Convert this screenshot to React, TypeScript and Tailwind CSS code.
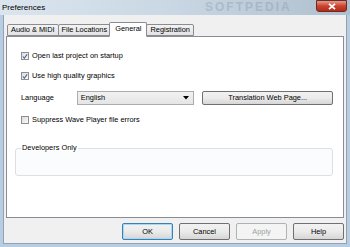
import React, { useState } from 'react';

const font = { fontFamily: '"Liberation Sans", Arial, sans-serif' };

const Check: React.FC<{ checked: boolean; label: string; onToggle: () => void }> = ({ checked, label, onToggle }) => (
  <div className="flex items-center gap-[3px] h-[10px] cursor-default" onClick={onToggle}>
    <div className="w-[8px] h-[8px] border border-[#8f8f8f] bg-gradient-to-br from-[#dcdcdc] to-[#fafafa] flex items-center justify-center">
      {checked && (
        <svg width="7" height="7" viewBox="0 0 7 7">
          <path d="M1 3.5 L2.8 5.5 L6 1" stroke="#4a5f97" strokeWidth="1.3" fill="none" />
        </svg>
      )}
    </div>
    <span className="text-[7.4px] text-black leading-none">{label}</span>
  </div>
);

const Btn: React.FC<{ label: string; w: string; focused?: boolean; disabled?: boolean }> = ({ label, w, focused, disabled }) => (
  <div
    className={`${w} h-[17px] rounded-[2px] border flex items-center justify-center text-[7.4px] ${
      focused ? 'border-[#3c7fb1] shadow-[inset_0_0_0_1px_#a6d9f4]' : disabled ? 'border-[#adb2b5]' : 'border-[#707070]'
    } ${disabled ? 'bg-[#f4f4f4] text-[#a0a0a0]' : 'bg-gradient-to-b from-[#f2f2f2] via-[#ebebeb] to-[#d6d6d6] text-black'}`}
  >
    {label}
  </div>
);

const tabs = ['Audio & MIDI', 'File Locations', 'General', 'Registration'];

export default function App() {
  const [openLast, setOpenLast] = useState(true);
  const [hq, setHq] = useState(true);
  const [suppress, setSuppress] = useState(false);

  return (
    <div className="w-[350px] h-[247px] bg-[#b9cde2] flex flex-col overflow-hidden" style={font}>
      {/* title bar */}
      <div className="relative h-[15px] flex items-start bg-gradient-to-r from-[#dbe5ee] via-[#c9d7e4] to-[#aebfcf] pl-[2px]">
        <span className="text-[8px] text-black leading-none mt-[4px]">Preferences</span>
        <span className="absolute left-[205px] top-[1px] text-[12px] font-bold tracking-[2px] text-[#8e9aa6] opacity-40 leading-[13px]">
          SOFTPEDIA
        </span>
        <div className="ml-auto mr-[3px] w-[31px] h-[12px] rounded-b-[3px] border border-[#6b2a22] bg-gradient-to-b from-[#e09a8c] via-[#c8432f] to-[#b52a16] flex items-center justify-center">
          <svg width="8" height="7" viewBox="0 0 8 7">
            <path d="M1 0.8 L7 6.2 M7 0.8 L1 6.2" stroke="white" strokeWidth="1.8" />
          </svg>
        </div>
      </div>

      {/* client area */}
      <div className="flex-1 mx-[3px] mb-[3px] bg-[#f0f0f0] border-x border-b border-[#8fa3b8] flex flex-col px-[2px]">
        <div className="h-[7px]" />
        {/* tabs */}
        <div className="flex items-end h-[14px] pl-[1px] relative z-10">
          {tabs.map((t) => {
            const sel = t === 'General';
            return (
              <div
                key={t}
                className={`border border-[#898c95] rounded-t-[2px] text-[7.4px] leading-none flex items-center justify-center px-[3px] ${
                  sel
                    ? 'h-[15px] -mb-px bg-white border-b-white -mx-[1px] px-[5px] pb-[2px]'
                    : 'h-[12px] bg-gradient-to-b from-[#f3f3f3] to-[#e3e3e3] -mr-px'
                }`}
              >
                {t}
              </div>
            );
          })}
        </div>
        {/* panel */}
        <div className="h-[182px] bg-white border border-[#898c95] flex flex-col pl-[14px] pr-[10px]">
          <div className="h-[14px]" />
          <Check checked={openLast} label="Open last project on startup" onToggle={() => setOpenLast(!openLast)} />
          <div className="h-[10px]" />
          <Check checked={hq} label="Use high quality graphics" onToggle={() => setHq(!hq)} />
          <div className="h-[10px]" />
          <div className="flex items-center h-[14px]">
            <span className="text-[7.4px] w-[56px] text-black leading-none">Language</span>
            <div className="w-[118px] h-[14px] border border-[#acacac] bg-gradient-to-b from-[#f2f2f2] to-[#e5e5e5] flex items-center pl-[3px] pr-[4px]">
              <span className="text-[7.4px] flex-1 leading-none">English</span>
              <svg width="6" height="4" viewBox="0 0 6 4">
                <path d="M0 0 H6 L3 3.5 Z" fill="#000" />
              </svg>
            </div>
            <div className="w-[8px]" />
            <Btn label="Translation Web Page..." w="w-[131px] !h-[14px]" />
          </div>
          <div className="h-[10px]" />
          <Check checked={suppress} label="Suppress Wave Player file errors" onToggle={() => setSuppress(!suppress)} />
          <div className="h-[23px]" />
          <div className="relative ml-[-6px] mr-[0px] h-[28px] border border-[#dcdfe3] rounded-[3px] bg-[#fbfcfd]">
            <span className="absolute left-[5px] top-[-5px] bg-white px-[1px] text-[7.4px] leading-none text-black">Developers Only</span>
          </div>
        </div>
        {/* buttons */}
        <div className="flex justify-end gap-[6px] mt-[5px] pr-[0px]">
          <Btn label="OK" w="w-[51px]" focused />
          <Btn label="Cancel" w="w-[51px]" />
          <Btn label="Apply" w="w-[51px]" disabled />
          <Btn label="Help" w="w-[51px]" />
        </div>
      </div>
    </div>
  );
}
